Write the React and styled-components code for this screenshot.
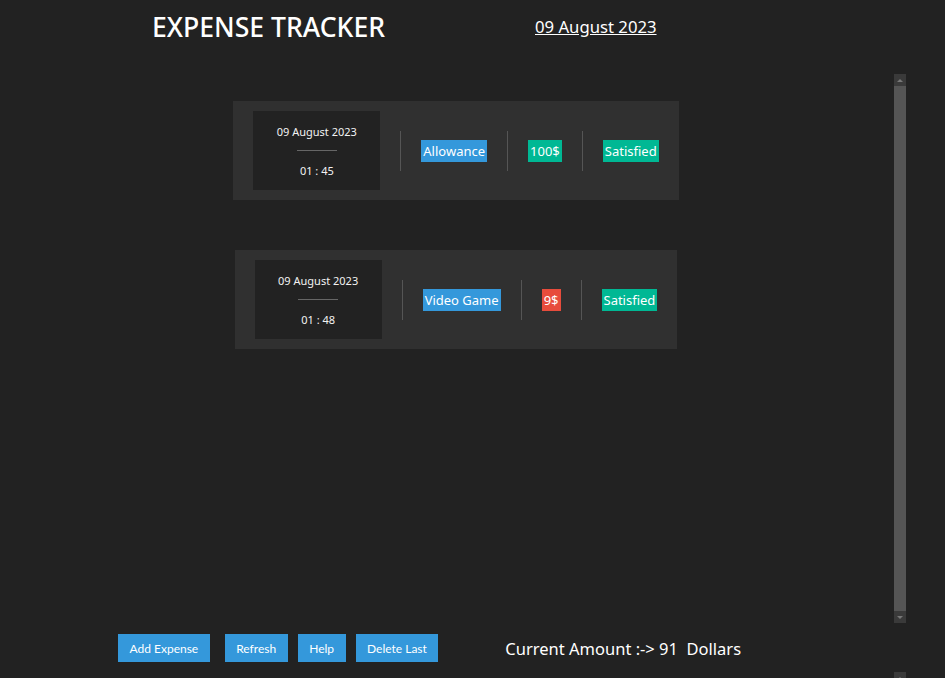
import React from 'react';
import styled, { createGlobalStyle } from 'styled-components';

const GlobalStyle = createGlobalStyle`
  html, body {
    margin: 0;
    padding: 0;
    background-color: #222222;
    overflow: hidden;
  }
  body {
    font-family: "Noto Sans", "Open Sans", sans-serif;
    color: #ffffff;
  }
`;

const Page = styled.div`
  width: 945px;
  height: 678px;
  display: flex;
  flex-direction: column;
  overflow: hidden;
`;

const Header = styled.header`
  height: 74px;
  flex-shrink: 0;
  display: flex;
  align-items: flex-start;
  box-sizing: border-box;
  padding: 13px 0 0 152px;
`;

const Title = styled.h1`
  margin: 0;
  font-size: 26.6px;
  font-weight: 500;
  line-height: 28px;
  color: #ffffff;
  width: 383px;
`;

const DateLink = styled.a`
  font-size: 16.7px;
  line-height: 28px;
  color: #ffffff;
  text-decoration: underline;
  cursor: pointer;
`;

/* list area with its scrollbar column */
const ListRow = styled.div`
  display: flex;
  flex-shrink: 0;
  height: ${p => p.$height}px;
  margin-left: 18px;
  width: 888px;
`;

const ListArea = styled.div`
  flex: 1;
  overflow: hidden;
`;

const ScrollBar = styled.div`
  width: 12px;
  display: flex;
  flex-direction: column;
  background-color: #555555;
`;

const ScrollButton = styled.div`
  height: 12px;
  flex-shrink: 0;
  background-color: #3a3a3a;
  display: flex;
  align-items: center;
  justify-content: center;
`;

const ScrollTrack = styled.div`
  flex: 1;
  background-color: #555555;
`;

const Arrow = ({ down }) => (
  <svg width="8" height="5" viewBox="0 0 8 5">
    <path d={down ? 'M1 1h6L4 4z' : 'M1 4h6L4 1z'} fill="#777777" />
  </svg>
);

const ExpenseList = styled.div`
  display: flex;
  flex-direction: column;
  align-items: center;
  gap: 50px;
  padding-top: 27px;
`;

const Card = styled.div`
  display: inline-flex;
  align-items: center;
  gap: 20px;
  padding: 10px 20px;
  background-color: #303030;
`;

const DateBox = styled.div`
  width: 127px;
  height: 79px;
  background-color: #222222;
  display: flex;
  flex-direction: column;
  align-items: center;
  justify-content: center;
  font-size: 11px;
  color: #f2f2f2;
`;

const Rule = styled.div`
  width: 40px;
  height: 1px;
  background-color: #666666;
  margin: 11px 0 12px;
`;

const Divider = styled.div`
  width: 1px;
  height: 40px;
  background-color: #555555;
`;

const badgeColors = {
  blue: '#3498db',
  green: '#00b894',
  red: '#e74c3c',
};

const Badge = styled.span`
  display: inline-block;
  height: 22px;
  line-height: 22px;
  padding: 0 2px;
  font-size: 13px;
  color: #ffffff;
  background-color: ${p => badgeColors[p.$tone]};
`;

const Footer = styled.footer`
  display: flex;
  flex-shrink: 0;
  align-items: center;
  padding: 11px 0 10px 118px;
`;

const Button = styled.button`
  height: 28px;
  padding: 0 11.5px;
  margin-right: 10px;
  border: none;
  background-color: #3498db;
  color: #ffffff;
  font-family: "Lato", "Noto Sans", sans-serif;
  font-size: 12px;
  cursor: pointer;

  &:first-child {
    margin-right: 15px;
  }
`;

const Amount = styled.div`
  margin-left: 57px;
  font-size: 16.5px;
  color: #ffffff;
  white-space: pre;
`;

const expenses = [
  { date: '09 August 2023', time: '01 : 45', name: 'Allowance', amount: '100$', income: true, mood: 'Satisfied' },
  { date: '09 August 2023', time: '01 : 48', name: 'Video Game', amount: '9$', income: false, mood: 'Satisfied' },
];

function FakeScrollBar() {
  return (
    <ScrollBar>
      <ScrollButton><Arrow /></ScrollButton>
      <ScrollTrack />
      <ScrollButton><Arrow down /></ScrollButton>
    </ScrollBar>
  );
}

export default function App() {
  return (
    <Page>
      <GlobalStyle />
      <Header>
        <Title>EXPENSE TRACKER</Title>
        <DateLink>09 August 2023</DateLink>
      </Header>

      <ListRow $height={549}>
        <ListArea>
          <ExpenseList>
            {expenses.map((e, idx) => (
              <Card key={idx}>
                <DateBox>
                  <span>{e.date}</span>
                  <Rule />
                  <span>{e.time}</span>
                </DateBox>
                <Divider />
                <Badge $tone="blue">{e.name}</Badge>
                <Divider />
                <Badge $tone={e.income ? 'green' : 'red'}>{e.amount}</Badge>
                <Divider />
                <Badge $tone="green">{e.mood}</Badge>
              </Card>
            ))}
          </ExpenseList>
        </ListArea>
        <FakeScrollBar />
      </ListRow>

      <Footer>
        <Button>Add Expense</Button>
        <Button>Refresh</Button>
        <Button>Help</Button>
        <Button>Delete Last</Button>
        <Amount>{'Current Amount :-> 91  Dollars'}</Amount>
      </Footer>

      <ListRow $height={120}>
        <ListArea />
        <FakeScrollBar />
      </ListRow>
    </Page>
  );
}
